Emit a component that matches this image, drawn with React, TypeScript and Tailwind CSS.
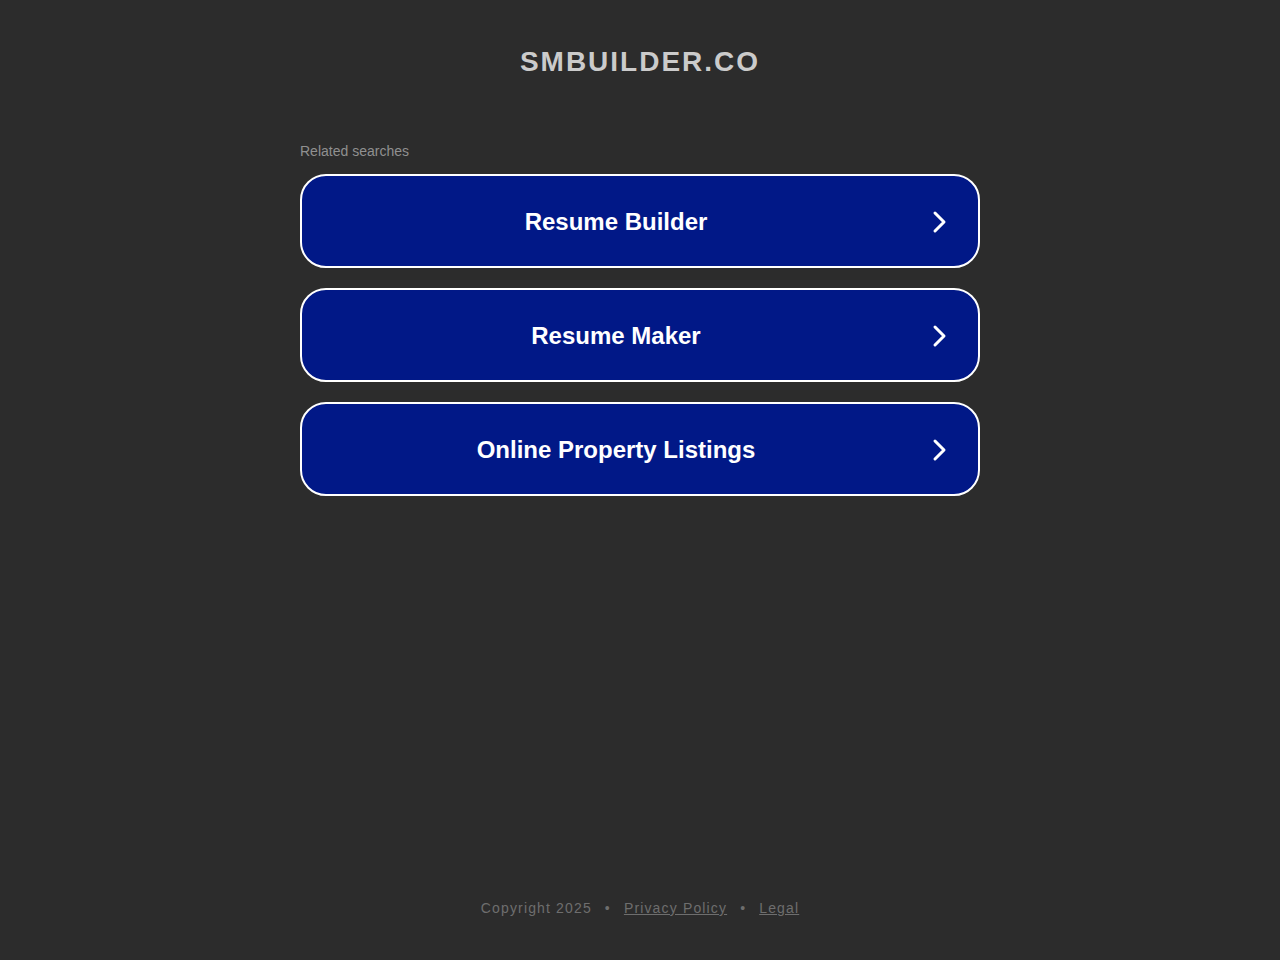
import React from "react";

const items = ["Resume Builder", "Resume Maker", "Online Property Listings"];

function Chevron() {
  return (
    <svg width="20" height="24" viewBox="0 0 20 24" fill="none">
      <path d="M5 3 L14 12 L5 21" stroke="#ffffff" strokeWidth="3" strokeLinecap="round" strokeLinejoin="round" />
    </svg>
  );
}

export default function App() {
  return (
    <div className="min-h-[960px] bg-[#2c2c2c] flex flex-col items-center" style={{ fontFamily: '"Liberation Sans", Arial, sans-serif' }}>
      <div className="pt-[44px] h-[80px] text-[28px] font-bold tracking-[2px] text-[#cbcbcb] leading-[36px]">SMBUILDER.CO</div>
      <div className="w-[680px] mt-[62px]">
        <div className="text-[14px] text-[#909090] leading-[18px]">Related searches</div>
        <div className="mt-[14px] flex flex-col gap-[20px]">
          {items.map((t) => (
            <div key={t} className="h-[94px] rounded-[26px] border-2 border-white bg-[#011887] flex items-center pl-0 pr-[28px] pt-[2px]">
              <div className="flex-1 text-center text-white text-[24px] font-bold">{t}</div>
              <Chevron />
            </div>
          ))}
        </div>
      </div>
      <div className="flex-1" />
      <div className="pb-[43px] text-[14px] tracking-[1.15px] text-[#6e6e6e] leading-[18px] flex items-center">
        <span>Copyright 2025</span>
        <span className="mx-[13px]">•</span>
        <span className="underline">Privacy Policy</span>
        <span className="mx-[13px]">•</span>
        <span className="underline">Legal</span>
      </div>
    </div>
  );
}
